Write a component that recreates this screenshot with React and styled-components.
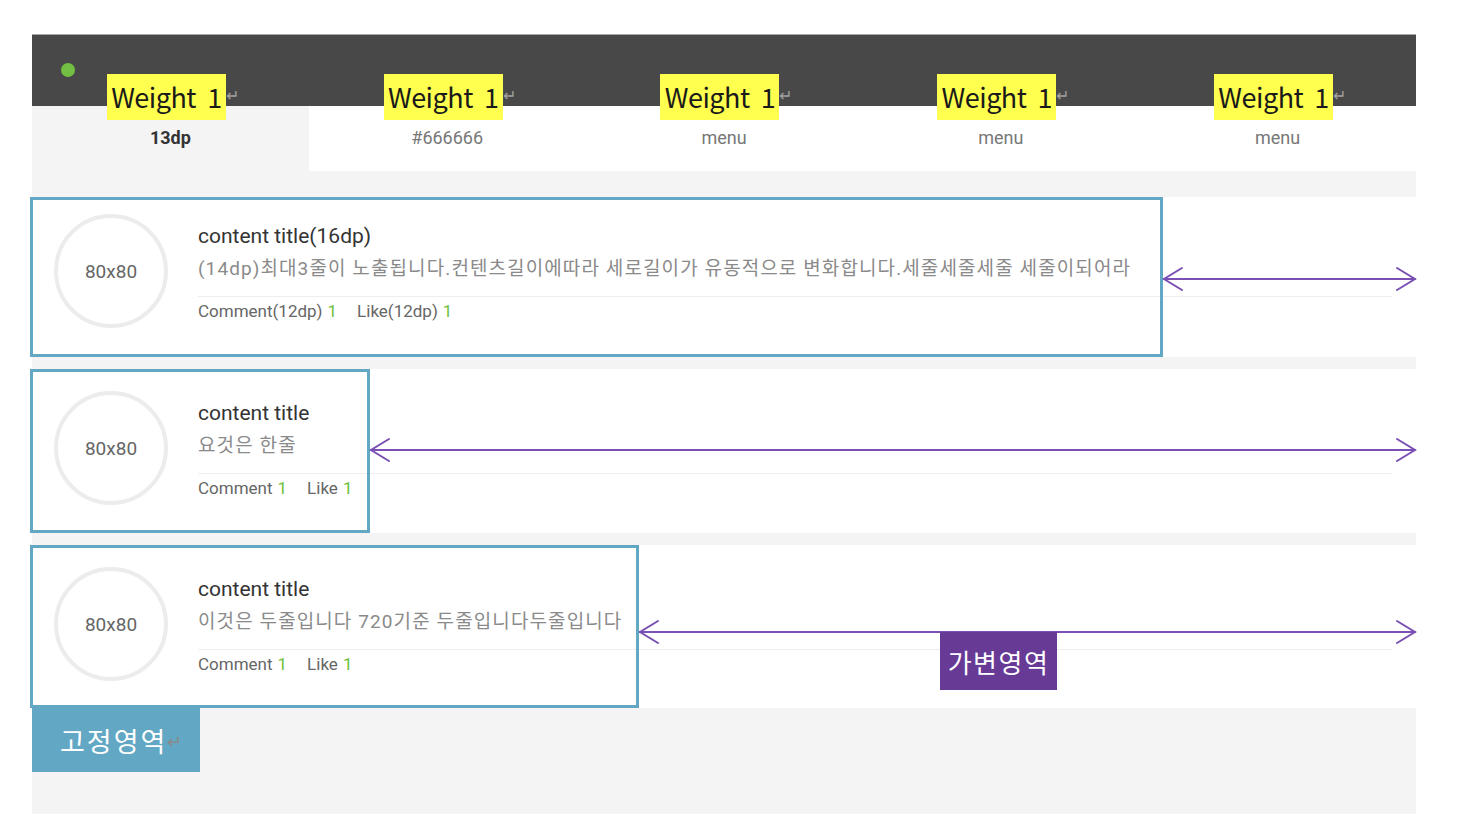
import React from 'react'
import styled, { createGlobalStyle } from 'styled-components'

const GlobalStyle = createGlobalStyle`
body {
  margin: 0;
  background: #ffffff;
  font-family: Roboto, 'Noto Sans CJK KR', sans-serif;
}
`

const Page = styled.div`
width: 1468px;
height: 834px;
padding: 34px 0 0 32px;
box-sizing: border-box;
`

const Frame = styled.div`
width: 1384px;
height: 780px;
background: #f4f4f4;
display: flex;
flex-direction: column;
`

const Header = styled.div`
height: 72px;
box-sizing: border-box;
background: #484848;
border-top: 1px solid #a8a8a8;
padding: 28px 0 0 29px;
`

const Dot = styled.div`
width: 14px;
height: 14px;
border-radius: 50%;
background: #72bf44;
`

const Tabs = styled.div`
display: grid;
grid-template-columns: repeat(5, 1fr);
height: 65px;
`

const Tab = styled.div`
position: relative;
display: flex;
justify-content: center;
padding-top: 20px;
box-sizing: border-box;
background: ${p => (p.active ? '#f4f4f4' : '#ffffff')};
color: ${p => (p.active ? '#333333' : '#777777')};
font-size: 18px;
font-weight: ${p => (p.active ? 700 : 400)};
line-height: 24px;
`

const WeightNote = styled.div`
position: absolute;
top: -32px;
left: 0;
right: 0;
padding-left: 8px;
display: flex;
justify-content: center;
align-items: flex-end;
font-weight: 400;
`

const Marker = styled.span`
background: #ffff4f;
color: #1a1a1a;
height: 46px;
width: 119px;
display: flex;
align-items: center;
justify-content: center;
font-family: 'Noto Sans CJK KR', sans-serif;
font-size: 27px;
font-weight: 400;
letter-spacing: -0.5px;
white-space: pre;
`

const ReturnMark = styled.span`
color: ${p => p.color || '#a0a0a0'};
font-size: ${p => p.size || 16}px;
width: 16px;
line-height: 1;
margin-bottom: ${p => p.drop ?? 16}px;
`

const List = styled.div`
display: flex;
flex-direction: column;
gap: 12px;
padding-top: 26px;
`

const Row = styled.div`
position: relative;
height: ${p => p.h}px;
background: #ffffff;
display: flex;
align-items: flex-start;
padding: ${p => p.top}px 24px 0 22px;
box-sizing: border-box;
`

const Thumb = styled.div`
width: 114px;
height: 114px;
flex-shrink: 0;
border-radius: 50%;
border: 4px solid #ececec;
box-sizing: border-box;
display: flex;
align-items: center;
justify-content: center;
color: #666666;
font-size: 19px;
`

const Body = styled.div`
flex: 1;
margin-left: 30px;
padding-top: 9px;
`

const Title = styled.div`
color: #333333;
font-size: 21px;
line-height: 26px;
`

const Desc = styled.div`
margin-top: 8px;
color: #8a8a8a;
font-size: 19px;
line-height: 24px;
white-space: nowrap;
letter-spacing: 1.1px;
`

const Divider = styled.div`
height: 1px;
background: #eeeeee;
margin-top: 15px;
`

const Meta = styled.div`
margin-top: 4px;
color: #666666;
font-size: 17px;
line-height: 20px;
display: flex;
gap: 20px;
`

const Count = styled.span`
color: #6cbf3b;
margin-left: 5px;
`

const Outline = styled.div`
position: absolute;
left: -2px;
top: 0;
bottom: 0;
width: ${p => p.w}px;
box-sizing: border-box;
border: 3px solid #62a8c4;
pointer-events: none;
`

const Arrow = styled.svg`
position: absolute;
left: ${p => p.from}px;
right: 0;
top: ${p => p.y - 12}px;
height: 24px;
overflow: visible;
`

const VariableTag = styled.div`
position: absolute;
left: 908px;
top: 87px;
width: 117px;
height: 58px;
background: #673a96;
color: #ffffff;
font-family: 'Noto Sans CJK KR', sans-serif;
font-size: 26px;
letter-spacing: 1.5px;
display: flex;
align-items: center;
justify-content: center;
`

const FixedTag = styled.div`
width: 168px;
height: 64px;
background: #62a8c4;
color: #ffffff;
font-family: 'Noto Sans CJK KR', sans-serif;
font-size: 27px;
letter-spacing: 2px;
display: flex;
align-items: center;
padding-left: 28px;
box-sizing: border-box;
`

const tabs = [
  { label: '13dp', active: true },
  { label: '#666666' },
  { label: 'menu' },
  { label: 'menu' },
  { label: 'menu' },
]

const SpanArrow = ({ from, y, width }) => (
  <Arrow from={from} y={y} viewBox={`0 0 ${width} 24`} preserveAspectRatio="none">
    <g stroke="#7a50b4" strokeWidth="2" fill="none" strokeLinecap="round">
      <line x1="1" y1="12" x2={width - 1} y2="12" />
      <polyline points="19,1 1,12 19,23" />
      <polyline points={`${width - 19},1 ${width - 1},12 ${width - 19},23`} />
    </g>
  </Arrow>
)

const Item = ({ h, top, title, desc, comment, like, box, arrowY, children }) => (
  <Row h={h} top={top}>
    <Thumb>80x80</Thumb>
    <Body>
      <Title>{title}</Title>
      <Desc>{desc}</Desc>
      <Divider />
      <Meta>
        <span>{comment}<Count>1</Count></span>
        <span>{like}<Count>1</Count></span>
      </Meta>
    </Body>
    <Outline w={box} />
    <SpanArrow from={box - 2} y={arrowY} width={1384 - box + 2} />
    {children}
  </Row>
)

const App = () => {
  return (
    <Page>
      <GlobalStyle />
      <Frame>
        <Header>
          <Dot />
        </Header>
        <Tabs>
          {tabs.map((t, i) => (
            <Tab key={i} active={t.active}>
              {t.label}
              <WeightNote>
                <Marker>Weight  1</Marker>
                <ReturnMark>↵</ReturnMark>
              </WeightNote>
            </Tab>
          ))}
        </Tabs>
        <List>
          <Item
            h={160}
            top={17}
            title="content title(16dp)"
            desc="(14dp)최대3줄이 노출됩니다.컨텐츠길이에따라 세로길이가 유동적으로 변화합니다.세줄세줄세줄 세줄이되어라"
            comment="Comment(12dp)"
            like="Like(12dp)"
            box={1133}
            arrowY={82}
          />
          <Item
            h={164}
            top={22}
            title="content title"
            desc="요것은 한줄"
            comment="Comment"
            like="Like"
            box={340}
            arrowY={81}
          />
          <Item
            h={163}
            top={22}
            title="content title"
            desc="이것은 두줄입니다 720기준 두줄입니다두줄입니다"
            comment="Comment"
            like="Like"
            box={609}
            arrowY={87}
          >
            <VariableTag>가변영역</VariableTag>
          </Item>
        </List>
        <FixedTag>
          고정영역
          <ReturnMark color="#8a8a8a" size={18} drop={0}>↵</ReturnMark>
        </FixedTag>
      </Frame>
    </Page>
  )
}

export default App
